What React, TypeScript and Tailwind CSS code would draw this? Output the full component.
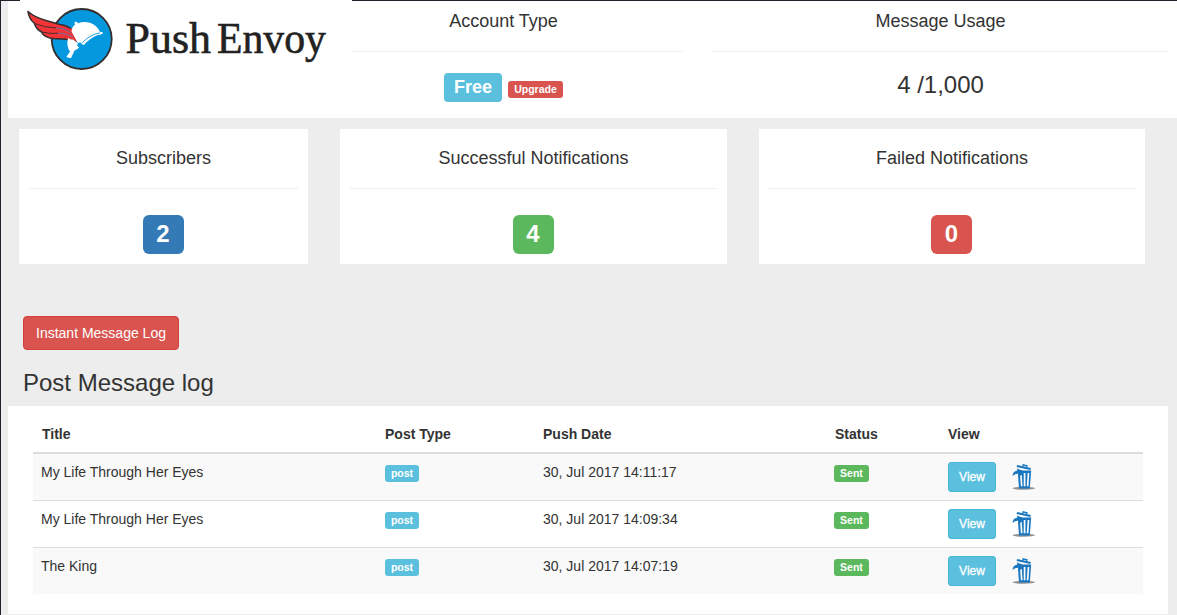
const messages = [
  { title: 'My Life Through Her Eyes', date: '30, Jul 2017 14:11:17' },
  { title: 'My Life Through Her Eyes', date: '30, Jul 2017 14:09:34' },
  { title: 'The King', date: '30, Jul 2017 14:07:19' },
];

const columns = 'grid grid-cols-[344px_158px_291px_114px_195px]';

function Logo() {
  return (
    <svg width="332" height="90" viewBox="20 0 332 90" className="block bg-white" aria-label="Push Envoy">
      <circle cx="81.7" cy="39" r="30" fill="#0498df" stroke="#352e2f" strokeWidth="1.8" />
      <path
        d="M28 11.5 Q34 17 46 20.5 L60 24.5 Q68 26 70.5 28.5 L76.5 41 L73.5 41 Q66 38.5 55 38.8 Q44 38 41.5 32 Q36 29 34.5 23.5 Q29 19 28 11.5Z"
        fill="#f03438"
        stroke="#352e2f"
        strokeWidth="1.6"
        strokeLinejoin="round"
      />
      <path d="M34.5 23.5 Q44 27.5 56 28 M41.5 32 Q50 34 58 33.3" fill="none" stroke="#352e2f" strokeWidth="0.9" />
      <path d="M70.5 28.5 L76.5 41" stroke="#f03438" strokeWidth="1.8" />
      <path d="M56 28 Q66 28.5 71 33 M58 33.3 Q67 33 73 37.5" fill="none" stroke="#4a7fb5" strokeWidth="0.8" />
      <path
        d="M71.5 31.5 Q72 26.5 75 24.5 Q73.7 22.5 75.3 21.8 Q77.3 21.5 77.8 23.2 Q84 21 90 22.7 Q97 25 99.8 31.8 L103.2 32.6 Q101.5 35.2 97 35.2 Q90 38 84 45 L77.8 43Z"
        fill="white"
      />
      <path d="M100 32.8 Q89 34.8 82 43.2" fill="none" stroke="#0498df" strokeWidth="0.9" />
      <path d="M68 38 Q71 39.8 73 39.5 L77 42.5 L80 45 Q79.5 48.5 74.5 50.5 L71.2 57.8 Q69 58.5 66.5 56.7 L70 51.5 Q66 46 68 38Z" fill="white" />
      <circle cx="79.6" cy="44.9" r="2.3" fill="#0498df" />
      <g fontFamily="'Liberation Serif', serif" fontSize="44.5" fill="#222222" stroke="#222222" strokeWidth="0.6">
        <text x="125.5" y="53.3" textLength="85.5" lengthAdjust="spacingAndGlyphs">Push</text>
        <text x="217" y="53.3" textLength="109" lengthAdjust="spacingAndGlyphs">Envoy</text>
      </g>
    </svg>
  );
}

function TrashIcon() {
  return (
    <svg width="24" height="30" viewBox="0 0 24 30" className="ml-4 block">
      <ellipse cx="11.8" cy="26.3" rx="11.3" ry="1.5" fill="#929292" />
      <path d="M6.2 8.6 H19.2 L17.8 26.4 H7 L6 13Z" fill="#1a77bf" />
      <path d="M8.9 13 L9.7 24.3 M12.6 11 V24.3 M16.5 11 L15.6 24.3" stroke="#f7f9fb" strokeWidth="1.7" />
      <path d="M4.9 4 L18.6 7" stroke="#1a77bf" strokeWidth="2.3" />
      <path d="M10.8 4.6 L11.2 2.9 L14.9 3.7 L14.5 5.4" fill="none" stroke="#1a77bf" strokeWidth="1.4" />
      <path d="M4.8 6.6 L10.2 8.4 L8.8 14.3 L7.2 11.8 Q3.6 11 0.6 14 Q0.5 9.3 5.4 8.4Z" fill="#1a77bf" />
    </svg>
  );
}

function Stat({ title, value, color }: { title: string; value: number; color: string }) {
  return (
    <section className="flex h-[135px] flex-col items-center bg-white px-[10px] pt-[19px]">
      <h4 className="text-[18px] leading-5">{title}</h4>
      <hr className="mt-5 w-full border-[#eeeeee]" />
      <span className={`mt-[26px] mr-px flex h-[39px] w-[41px] items-center justify-center rounded-[6px] pb-[2px] text-2xl font-bold text-white ${color}`}>
        {value}
      </span>
    </section>
  );
}

function Tag({ text, color }: { text: string; color: string }) {
  return <span className={`block h-[17px] rounded-[3px] text-center text-[10.5px] leading-[17px] font-bold text-white ${color}`}>{text}</span>;
}

export default function App() {
  return (
    <div className="h-[615px] w-[1177px] overflow-hidden border-l border-[#20232c] bg-[#ededed] font-['Liberation_Sans',Arial,sans-serif] text-sm text-[#333333]">
      <header className="flex h-[118px]">
        <div className="w-[7px] border-t border-[#20232c]" />
        <div className="w-3 border-t border-[#20232c]">
          <div className="h-full bg-white" />
        </div>
        <div className="h-full w-[332px] bg-white">
          <Logo />
        </div>
        <div className="flex h-full flex-1 border-t border-[#20232c] bg-white">
          <section className="w-[331px] pt-[10px]">
            <h4 className="pr-7 text-center text-[18px] leading-5">Account Type</h4>
            <hr className="mt-5 border-[#eeeeee]" />
            <div className="mt-[21px] flex gap-[6px] pl-[92px]">
              <span className="h-[29px] w-[58px] rounded-[4px] bg-[#5bc0de] text-center text-[18px] leading-[28px] font-bold text-white">Free</span>
              <span className="mt-2 w-[55px]"><Tag text="Upgrade" color="bg-[#d9534f]" /></span>
            </div>
          </section>
          <section className="ml-[30px] w-[455px] pt-[10px] text-center">
            <h4 className="text-[18px] leading-5">Message Usage</h4>
            <hr className="mt-5 border-[#eeeeee]" />
            <p className="mt-5 text-2xl leading-[26px]">4 /1,000</p>
          </section>
        </div>
      </header>

      <main>
        <div className="grid grid-cols-[289px_387px_386px] gap-8 pt-[11px] pl-[18px]">
          <Stat title="Subscribers" value={2} color="bg-[#337ab7]" />
          <Stat title="Successful Notifications" value={4} color="bg-[#5cb85c]" />
          <Stat title="Failed Notifications" value={0} color="bg-[#d9534f]" />
        </div>

        <button className="mt-[52px] ml-[22px] block h-[34px] w-[156px] rounded-[4px] border border-[#d43f3a] bg-[#d9534f] text-sm leading-5 text-white">
          Instant Message Log
        </button>
        <h3 className="mt-5 ml-[22px] text-2xl leading-[26px]">Post Message log</h3>

        <section className="mt-[10px] ml-[7px] h-[208px] w-[1160px] bg-white px-[25px] pt-[10px]">
          <div className={`${columns} h-[38px] items-center border-b-2 border-[#dddddd] pl-[9px] font-bold`}>
            <span>Title</span>
            <span className="-ml-px">Post Type</span>
            <span className="-ml-px">Push Date</span>
            <span>Status</span>
            <span className="-ml-px">View</span>
          </div>
          {messages.map((message) => (
            <div key={message.date} className={`${columns} h-[47px] border-b border-[#dddddd] pt-2 pl-2 odd:bg-white even:bg-[#f9f9f9] last:h-[46px] last:border-b-0`}>
              <span className="leading-5">{message.title}</span>
              <span className="mt-[3px] w-[34px]"><Tag text="post" color="bg-[#5bc0de]" /></span>
              <span className="leading-5">{message.date}</span>
              <span className="mt-[3px] w-[35px]"><Tag text="Sent" color="bg-[#5cb85c]" /></span>
              <span className="flex">
                <button className="h-[30px] w-12 rounded-[3px] border border-[#46b8da] bg-[#5bc0de] text-xs text-white [-webkit-text-stroke:0.3px_white]">View</button>
                <TrashIcon />
              </span>
            </div>
          ))}
        </section>
      </main>
    </div>
  );
}
